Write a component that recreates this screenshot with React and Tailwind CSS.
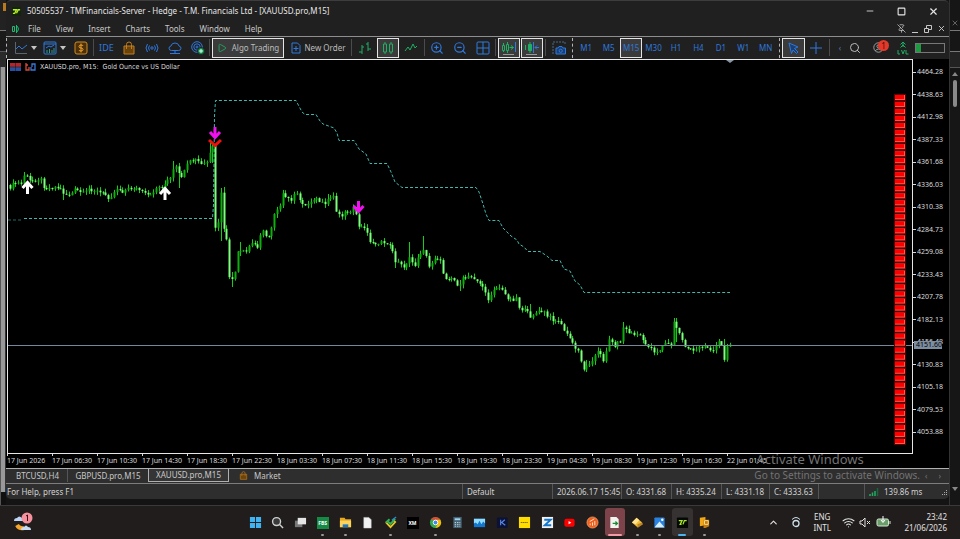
import React from "react";
import {
  ChevronUp, Minus, PinOff, Play, Search, Square, Wifi, X, ZoomIn, ZoomOut,
} from "lucide-react";

const PRICES = [
  "4464.28", "4438.63", "4412.98", "4387.33", "4361.68", "4336.03", "4310.38", "4284.73", "4259.08",
  "4233.43", "4207.78", "4182.13", "4156.48", "4130.83", "4105.18", "4079.53", "4053.88",
];

const DATES = [
  "17 Jun 2026", "17 Jun 06:30", "17 Jun 10:30", "17 Jun 14:30", "17 Jun 18:30", "17 Jun 22:30",
  "18 Jun 03:30", "18 Jun 07:30", "18 Jun 11:30", "18 Jun 15:30", "18 Jun 19:30", "18 Jun 23:30",
  "19 Jun 04:30", "19 Jun 08:30", "19 Jun 12:30", "19 Jun 16:30", "22 Jun 01:45",
];

const TIMEFRAMES = ["M1", "M5", "M15", "M30", "H1", "H4", "D1", "W1", "MN"];
const MENUS = ["File", "View", "Insert", "Charts", "Tools", "Window", "Help"];

// closing prices as x,y turning points
const CLOSES = [
  [8, 185], [11, 188], [14, 183], [18, 183], [21, 184], [24, 175], [28, 178], [30, 181], [34, 180], [38, 179],
  [42, 180], [44, 186], [47, 189], [52, 187], [57, 187], [61, 190], [64, 194], [68, 195], [72, 193], [75, 190],
  [80, 192], [84, 194], [89, 189], [94, 190], [98, 192], [104, 194], [108, 197], [112, 195], [117, 188],
  [122, 191], [128, 189], [134, 188], [139, 190], [144, 194], [150, 196], [155, 188], [161, 187], [165, 184],
  [168, 179], [172, 178], [174, 163], [177, 170], [180, 177], [184, 172], [188, 163], [194, 160], [197, 160],
  [200, 165], [206, 163], [209, 160], [211, 148], [213, 148], [215, 229], [218, 222], [221, 194], [224, 228],
  [227, 247], [229, 279], [232, 278], [235, 272], [238, 253], [240, 252], [246, 252], [249, 246], [253, 243],
  [257, 246], [260, 234], [263, 232], [266, 236], [270, 235], [272, 218], [276, 208], [280, 207], [283, 195],
  [286, 198], [290, 200], [293, 197], [296, 193], [300, 200], [305, 206], [310, 202], [314, 198], [320, 202],
  [325, 206], [328, 199], [333, 196], [336, 210], [340, 216], [344, 213], [350, 210], [353, 209], [355, 212],
  [358, 225], [362, 228], [367, 231], [370, 243], [376, 243], [382, 243], [388, 243], [392, 250], [395, 261],
  [400, 264], [405, 267], [408, 253], [412, 264], [415, 265], [418, 256], [422, 248], [425, 253], [429, 265],
  [433, 265], [436, 258], [440, 260], [443, 272], [447, 279], [452, 279], [459, 286], [463, 279], [470, 277],
  [476, 279], [482, 286], [487, 300], [490, 298], [492, 289], [500, 287], [503, 293], [511, 300], [517, 297],
  [519, 307], [525, 311], [530, 316], [536, 313], [543, 311], [546, 316], [551, 318], [556, 321], [561, 323],
  [564, 332], [569, 335], [573, 347], [578, 351], [581, 360], [584, 369], [588, 364], [593, 358], [598, 352],
  [603, 360], [606, 350], [609, 339], [614, 346], [620, 340], [624, 324], [628, 333], [634, 334], [640, 335],
  [644, 344], [649, 346], [654, 351], [658, 352], [663, 345], [667, 342], [672, 347], [674, 322], [677, 330],
  [681, 337], [685, 346], [690, 350], [695, 352], [698, 346], [703, 345], [708, 348], [713, 351], [717, 343],
  [722, 343], [724, 358], [727, 345], [731, 345],
];

// long wicks: x, top, bottom
const SPIKES = [
  [24, 172, 184], [64, 190, 200], [174, 161, 172], [179, 166, 188], [211, 143, 163], [221, 188, 241],
  [224, 187, 232], [232, 272, 287], [240, 242, 256], [283, 190, 208], [328, 194, 206], [409, 242, 262],
  [423, 236, 253], [395, 256, 268], [459, 280, 291], [530, 304, 314], [586, 360, 372], [624, 322, 333],
  [675, 318, 342], [694, 346, 354], [724, 339, 359],
];

const BAND =
  "M24 218.5H212.5L213.5 205L214.5 116L215.5 100.5H296L302 112L305 114.5H316L320 121L323 124L334 128L337 133L339 140.5H354L359 149L366 154L370 163.5H387L391 172L395 182L402 187.5H476L479 192L483 204L486 214L489 220.5H499L503 228L511 236L517 240L519 244L524 247L528 251.5H540L547 256L552 260.5H560L564 269L570 271L575 281L580 285L584 292.5H730";

const closeAt = (x) => {
  const i = CLOSES.findIndex((p) => p[0] >= x);
  if (i <= 0) return CLOSES[i === 0 ? 0 : CLOSES.length - 1][1];
  const [x0, y0] = CLOSES[i - 1];
  const [x1, y1] = CLOSES[i];
  return y0 + ((y1 - y0) * (x - x0)) / (x1 - x0);
};

const noise = (n) => {
  const v = Math.sin(n * 12.9898) * 43758.5453;
  return v - Math.floor(v);
};

const buildCandles = () => {
  const list = [];
  let open = 185;
  for (let i = 1; i <= 257; i++) {
    const x = Math.round(7 + i * 2.8125);
    const close = closeAt(x) + (noise(i) - 0.5) * 4;
    let top = Math.min(open, close) - noise(i + 300) * 4;
    let bottom = Math.max(open, close) + noise(i + 600) * 4;
    const spike = SPIKES.find((s) => Math.abs(s[0] - x) <= 1);
    if (spike) {
      top = Math.min(top, spike[1]);
      bottom = Math.max(bottom, spike[2]);
    }
    list.push({ x, open, close, top, bottom });
    open = close;
  }
  return list;
};

const candles = buildCandles();

const Arrow = ({ x, y, color, up }) => (
  <path
    d={up ? "M0 13V1M-5 7L0 1.500L5 7" : "M0 0V11M-5 5L0 10.500L5 5"}
    transform={`translate(${x} ${y})`}
    fill="none"
    stroke={color}
    strokeWidth="3"
  />
);

const Plot = () => (
  <svg viewBox="8 60 904 393" preserveAspectRatio="none" className="absolute inset-0 h-full w-full" aria-hidden="true">
    <path d="M726 60h8l-4 3z" fill="#8a97a5" />
    <path d="M8 220H22" stroke="#1d6a66" strokeDasharray="3 2" />
    <path d={BAND} fill="none" stroke="#3fb8ae" strokeDasharray="3 2" />
    {candles.map((c, i) => {
      const bear = c.close > c.open;
      return (
        <g key={i}>
          <path d={`M${c.x + 0.5} ${c.top}V${c.bottom}`} stroke="#14d014" />
          <rect
            x={c.x - 0.5}
            y={Math.min(c.open, c.close)}
            width="2"
            height={Math.max(1, Math.abs(c.close - c.open))}
            fill={bear ? "#7dff7d" : "#0cae0c"}
          />
        </g>
      );
    })}
    <path d="M8 345.500H912" stroke="#76879a" />
    <Arrow x={27.5} y={181} color="#fff" up />
    <Arrow x={165} y={187} color="#fff" up />
    <path d="M209 140l6 5.500l6-5.500" fill="none" stroke="#f01010" strokeWidth="3" />
    <Arrow x={215} y={127} color="#f010f0" />
    <Arrow x={358.5} y={201} color="#f010f0" />
    {Array.from({ length: 50 }, (_, i) => (
      <g key={i}>
        <rect x="894" y={94 + i * 7.02} width="12" height="7" fill="#5c0000" />
        <rect x="895" y={95 + i * 7.02} width="10" height="5" fill="#ff5a4a" />
        <rect x="895" y={95 + i * 7.02} width="9" height="4" fill="#ff0000" />
      </g>
    ))}
  </svg>
);

const Ico = ({ children, className = "h-[14px] w-[14px]", box = "0 0 14 14" }) => (
  <svg viewBox={box} className={className} fill="none" stroke="currentColor" aria-hidden="true">
    {children}
  </svg>
);

const Tool = ({ label, active, className = "text-[#2f78dc]", children }) => (
  <button
    type="button"
    aria-label={label}
    className={`flex h-5 items-center justify-center border ${active ? "border-[#e4e4e4] bg-[#3b3b3b]" : "border-transparent"} ${className}`}
  >
    {children}
  </button>
);

const Sep = () => <div className="h-[17px] w-px bg-[#4b4b4b]" />;
const Dotted = () => <div className="h-5 border-l border-dashed border-[#b5b5b5]" />;
const Caret = () => (
  <Ico className="h-1 w-[6px]" box="0 0 6 4">
    <path d="M0 0h6L3 4z" fill="#c4c4c4" stroke="none" />
  </Ico>
);

const Bag = ({ className }) => (
  <Ico className={className}>
    <path d="M2 5h10v8H2z" fill="#6b430c" stroke="#c27d1c" />
    <path d="M4.500 8V3.500Q4.500 1 7 1t2.500 2.500V8" stroke="#c27d1c" />
  </Ico>
);

const TitleBar = () => (
  <header className="flex h-5 items-center pl-[6px] text-[#e6e6e6]">
    <Ico className="h-[9px] w-[9px]" box="0 0 10 10">
      <rect width="10" height="10" fill="#12250c" stroke="none" />
      <path d="M1 3h4L3 7H1M9 3H7L5 7" stroke="#b6ee2c" strokeWidth="1.500" />
    </Ico>
    <h1 className="ml-[6px] whitespace-nowrap text-[8px] leading-[12px]">
      50505537 - TMFinancials-Server - Hedge - T.M. Financials Ltd - [XAUUSD.pro,M15]
    </h1>
    <div className="ml-auto flex items-center gap-[22px] pr-[10px]">
      <button type="button" aria-label="Minimize"><Minus size={10} strokeWidth={2} /></button>
      <button type="button" aria-label="Maximize"><Square size={9} strokeWidth={3} /></button>
      <button type="button" aria-label="Close"><X size={11} strokeWidth={2.5} /></button>
    </div>
  </header>
);

const MenuBar = () => (
  <nav className="flex h-4 items-center border-b border-[#8e8e8e] pl-[5px] text-[8px] leading-[12px] text-[#c8c8c8]">
    <Ico className="h-[10px] w-[9px] text-[#1fb972]" box="0 0 9 10">
      <path d="M1.500 2.500h2v5h-2zM5.500 1v8M5.500 2.500h1Q8.500 5 6.500 7.500h-1" />
    </Ico>
    <div className="ml-2 flex gap-[15px]">
      {MENUS.map((m) => (
        <button key={m} type="button">{m}</button>
      ))}
    </div>
    <div className="ml-auto flex items-center gap-[5px] pr-[3px]">
      <button type="button" aria-label="Unpin"><PinOff size={9} /></button>
      <button type="button" aria-label="Minimize chart"><Ico className="h-2 w-2" box="0 0 8 8"><path d="M1 7.500h6" /></Ico></button>
      <button type="button" aria-label="Restore chart">
        <Ico className="h-2 w-2" box="0 0 8 8"><path d="M.5 3.500h4v4h-4zM2.500 3V.5h5v4H5" /></Ico>
      </button>
      <button type="button" aria-label="Close chart"><X size={9} strokeWidth={2.5} /></button>
    </div>
  </nav>
);

const Toolbar = () => (
  <div className="flex h-[22px] items-center overflow-hidden pb-px text-[8px] leading-[12px]">
    <Dotted />
    <div className="ml-[4px] grid w-[58px] grid-cols-2">
      <button type="button" aria-label="Line studies" className="flex items-center justify-center gap-[3px] text-[#2f78dc]">
        <Ico><path d="M1.500 1v11.500H13" stroke="#5b6570" /><path d="M2 8l3-3 3 3 5-4" /></Ico>
        <Caret />
      </button>
      <button type="button" aria-label="Indicators" className="flex items-center justify-center gap-[3px] text-[#2f78dc]">
        <Ico><rect x="1" y="1" width="12" height="12" rx="1" /><path d="M1 3h12M3 7l3-2 2 1 3-2" /><path d="M4 12V9M6.500 12V8M9 12V9M11 12V7" stroke="#2a9a8a" /></Ico>
        <Caret />
      </button>
    </div>
    <Tool label="Trade" className="w-[24px] text-[#d08a22]">
      <Ico><rect x="1" y="1" width="12" height="12" rx="2" fill="#4b300a" /><path d="M9 5Q9 4 7 4T5 5.500t2 1.500 2 1.500T7 10 5 9M7 2.500v9" stroke="#f0a22e" /></Ico>
    </Tool>
    <Sep />
    <div className="ml-px grid w-[114px] grid-cols-5">
      <Tool label="MetaEditor"><span className="text-[9px]">IDE</span></Tool>
      <Tool label="Market"><Bag className="h-[14px] w-[14px]" /></Tool>
      <Tool label="Signals">
        <Ico><circle cx="7" cy="7" r="1.200" /><path d="M4.500 4.500q-2 2.500 0 5M9.500 4.500q2 2.500 0 5M2.500 3q-3 4 0 8M11.500 3q3 4 0 8" /></Ico>
      </Tool>
      <Tool label="Virtual hosting">
        <Ico><path d="M3.500 9.500Q1 9.500 1 7.200 1 5.500 3 5 3.500 2 7 2t4 3q2 .5 2 2.200 0 2.300-2.500 2.300zM7 9.500V12M2 12.500h10" /></Ico>
      </Tool>
      <Tool label="Community">
        <Ico><circle cx="6" cy="6" r="5.300" /><circle cx="6" cy="6" r="3.200" /><circle cx="6" cy="6" r="1" /><circle cx="10" cy="10" r="3.500" fill="#159957" stroke="#222" /><path d="M10 8v4M8 10h4" stroke="#dfffe9" /></Ico>
      </Tool>
    </div>
    <Sep />
    <button type="button" className="ml-[2px] flex h-5 w-[72px] items-center justify-center gap-[5px] border border-[#e4e4e4] bg-[#3b3b3b] text-[#bcbcbc]">
      <Play size={10} className="text-[#1fae63]" />
      Algo Trading
    </button>
    <button type="button" className="ml-px flex h-5 w-[66px] items-center justify-center gap-[4px] text-[#bcbcbc]">
      <Ico className="h-[12px] w-[10px] text-[#2f78dc]" box="0 0 10 12"><path d="M1 1h5.500L9 3.500V11H1zM5 4v5M2.500 6.500h5" /></Ico>
      New Order
    </button>
    <Sep />
    <div className="ml-[2px] grid w-[68px] grid-cols-3">
      <Tool label="Bars" className="text-[#1fae63]"><Ico><path d="M4 4v9M1 11h3M4 6h2M10 1v9M8 3h2M10 8h3" /></Ico></Tool>
      <Tool label="Candles" active className="text-[#1fae63]"><Ico><path d="M2.500 3h3v8h-3zM8.500 3h3v8h-3zM4 1v2M4 11v2M10 1v2M10 11v2" /></Ico></Tool>
      <Tool label="Line" className="text-[#1fae63]"><Ico><path d="M1 10l3-4 2 3 3-6 2 4 2-2" /></Ico></Tool>
    </div>
    <div className="ml-[2px]"><Sep /></div>
    <div className="grid w-[70px] grid-cols-3">
      <Tool label="Zoom in"><ZoomIn size={14} strokeWidth={2} /></Tool>
      <Tool label="Zoom out"><ZoomOut size={14} strokeWidth={2} /></Tool>
      <Tool label="Tile windows"><Ico><rect x="1" y="1" width="12" height="12" rx="1" /><path d="M7 1v12M1 7h12" /></Ico></Tool>
    </div>
    <Sep />
    <div className="mx-[2px] grid w-[45px] grid-cols-2 gap-px">
      <Tool label="Auto scroll" active className="text-[#1fae63]">
        <Ico className="h-4 w-4" box="0 0 16 16"><path d="M1.500 5.500h2v5h-2zM5.500 4.500h2v6h-2zM2.500 3v2M2.500 11v1M6.500 2v2M6.500 11v2M8.500 7.500h4M10 5.500l2.500 2L10 9.500" /><path d="M14.500 2v10" stroke="#2f78dc" /><path d="M2 14.500h11" stroke="#999" /></Ico>
      </Tool>
      <Tool label="Chart shift" active className="text-[#1fae63]">
        <Ico className="h-4 w-4" box="0 0 16 16"><path d="M1.500 5v5M6 2v11" /><path d="M4.500 4.500h3v6h-3z" fill="currentColor" /><path d="M9.500 2v11M15 7.500h-4M13 5.500l-2 2 2 2" stroke="#2f78dc" /><path d="M2 14.500h11" stroke="#999" /></Ico>
      </Tool>
    </div>
    <Sep />
    <Tool label="Screenshot" className="w-[26px] text-[#2f78dc]">
      <Ico><path d="M1 13V1h12v3" strokeDasharray="2 1" stroke="#4d6788" /><path d="M4 7h2l1-1.500h3L11 7h2.500v6H4z" fill="#1b3f73" /><circle cx="8.700" cy="9.800" r="1.600" /></Ico>
    </Tool>
    <Dotted />
    <div className="mx-[2px] grid w-[202px] grid-cols-9">
      {TIMEFRAMES.map((t) => (
        <Tool key={t} label={t} active={t === "M15"}>{t}</Tool>
      ))}
    </div>
    <Dotted />
    <div className="ml-[2px] grid w-[45px] grid-cols-2">
      <Tool label="Cursor" active><Ico><path d="M3 2l9 4-3.500 1.500L12 11l-1.500 1.500L7 9l-1.500 3.500z" fill="#1b3f73" /></Ico></Tool>
      <Tool label="Crosshair"><Ico><path d="M7 1v4M7 9v4M1 7h4M9 7h4M7 5v4M5 7h4" /></Ico></Tool>
    </div>
    <div className="ml-[2px]"><Sep /></div>
    <div className="ml-auto flex items-center pr-[4px]">
      <Tool label="Previous tools" className="w-[10px] text-[#4f7cb5]">‹</Tool>
      <Tool label="Search" className="w-[20px] text-[#bcbcbc]"><Search size={12} strokeWidth={2} /></Tool>
      <button type="button" aria-label="Notifications" className="relative flex h-5 w-[26px] items-center justify-center text-[#bcbcbc]">
        <Ico className="h-[11px] w-[11px]"><circle cx="7" cy="7" r="6" /><circle cx="7" cy="5.500" r="2" /><path d="M3 11q4-4 8 0" /></Ico>
        <span className="absolute right-[2px] top-[2px] h-[11px] w-[11px] rounded-full bg-[#e23a2a] text-[8px] leading-[11px] text-[#4d0905]">1</span>
      </button>
      <Tool label="Level" className="w-[24px] text-[#1fae63]">
        <Ico><path d="M7 1v5M4.500 3.500L7 1l2.500 2.500M4.500 6.500L7 4l2.500 2.500M2 9v4h2M5.500 9L7 13l1.500-4M10 9v4h2.500" /></Ico>
      </Tool>
      <div className="h-[10px] w-[30px] border border-[#777]"><div className="h-full w-[5px] bg-[#1f9a42]" /></div>
    </div>
  </div>
);

const Chart = () => (
  <main className="flex min-h-0 flex-1 flex-col bg-black text-[7px] leading-[10px] text-[#dcdcdc]">
    <div className="flex min-h-0 flex-1">
      <section className="relative ml-px flex-1 border border-[#e6e6e6]">
        <Plot />
        <div className="relative flex items-center gap-[4px] px-[2px] pt-[2px]">
          <Ico className="h-2 w-[11px]" box="0 0 11 8"><path d="M0 0h11v4H0z" fill="#b3272a" stroke="none" /><path d="M0 4h11v4H0z" fill="#2850a0" stroke="none" /><path d="M0 4h11M5.500 0v8" stroke="#111" strokeWidth=".5" /></Ico>
          <Ico className="h-2 w-[11px]" box="0 0 11 8"><path d="M1 0v7h3V4M1 2h2" stroke="#d84a3a" strokeWidth="1.300" /><path d="M6 4v3h4V1H7v3" stroke="#3a78d8" strokeWidth="1.300" /></Ico>
          <h2 className="whitespace-pre font-['DejaVu_Sans_Condensed','DejaVu_Sans',sans-serif] text-[7px]">XAUUSD.pro, M15:  Gold Ounce vs US Dollar</h2>
        </div>
      </section>
      <aside className="relative flex w-9 flex-col justify-between pb-[17px] pt-[8px]">
        {PRICES.map((p) => (
          <div key={p} className="flex items-center gap-px"><span className="h-px w-[3px] bg-[#d6d6d6]" />{p}</div>
        ))}
        <div className="absolute left-px top-[71.500%] h-2 w-7 bg-[#7d8da0] pl-[2px] leading-[8px] text-black">4151.60</div>
      </aside>
    </div>
    <div className="ml-px flex h-[14px] overflow-hidden">
      {DATES.map((d) => (
        <div key={d} className="w-[45px] shrink-0 whitespace-nowrap">
          <div className="h-[2px] w-px bg-[#d6d6d6]" />
          {d}
        </div>
      ))}
    </div>
  </main>
);

const ChartTabs = () => (
  <div className="relative flex h-[15px] items-start border-t border-[#b0b0b0] bg-[#2e2e2e] text-[8px] leading-[13px] text-[#c8c8c8]">
    <button type="button" className="w-[62px] border-r border-[#555] pl-[2px]">BTCUSD,H4</button>
    <button type="button" className="w-[80px]">GBPUSD.pro,M15</button>
    <button type="button" className="w-[81px] border-x border-b border-[#b0b0b0] bg-[#353535] leading-[12px]">XAUUSD.pro,M15</button>
    <button type="button" className="ml-[10px] flex items-center gap-[6px]"><Bag className="h-[9px] w-[9px]" />Market</button>
    <div className="ml-auto flex gap-[11px] pr-[8px] text-[#777]"><span>‹</span><span>›</span></div>
    <div className="pointer-events-none absolute -top-[18px] right-[29px] whitespace-nowrap text-[#737373]">
      <p className="pl-[2px] text-[13px] leading-[17px]">Activate Windows</p>
      <p className="text-[10px] leading-[14px]">Go to Settings to activate Windows.</p>
    </div>
  </div>
);

const StatusBar = () => (
  <footer className="flex h-4 items-center whitespace-nowrap border-t border-[#7d7d7d] bg-[#2e2e2e] text-[8px] leading-[15px] text-[#d2d2d2] [&>span]:border-r [&>span]:border-[#555] [&>span]:pl-1">
    <p className="flex-1 border-r border-[#555] pl-px">For Help, press F1</p>
    <span className="w-[90px]">Default</span>
    <span className="w-[69px]">2026.06.17 15:45</span>
    <span className="w-[50px]">O: 4331.68</span>
    <span className="w-[50px]">H: 4335.24</span>
    <span className="w-[48px]">L: 4331.18</span>
    <span className="w-[49px]">C: 4333.63</span>
    <span className="h-[15px] w-[46px]" />
    <div className="flex w-[84px] items-center gap-[5px] pl-1">
      <Ico className="h-2 w-[10px]" box="0 0 10 8"><path d="M1 8V6M3.500 8V4.500M6 8V3" stroke="#1fae63" strokeWidth="1.500" /><path d="M8.500 8V0" stroke="#17653d" strokeWidth="1.500" /></Ico>
      139.86 ms
      <Ico className="ml-auto mr-px h-[7px] w-[7px]" box="0 0 7 7"><path d="M1 6.500h6M3 4.500h4M5 2.500h2" strokeDasharray="1 1" stroke="#aaa" /></Ico>
    </div>
  </footer>
);

const APPS = [
  { name: "Start", art: <path d="M1 1h5.500v5.500H1zM7.500 1H13v5.500H7.500zM1 7.500h5.500V13H1zM7.500 7.500H13V13H7.500z" fill="#3fb4f0" stroke="none" /> },
  { name: "Search", art: <><circle cx="6" cy="6" r="4.300" stroke="#d0d0d0" strokeWidth="1.500" fill="#3a3a3a" /><path d="M9 9l4 4" stroke="#d0d0d0" strokeWidth="1.500" /></> },
  { name: "Task view", art: <><path d="M1 5h8v7H1z" fill="#777" stroke="none" /><path d="M4 2h9v7H4z" fill="#e4e4e4" stroke="none" /></> },
  { name: "FBS", dot: true, text: "FBS", tile: "bg-[#158a45] text-white" },
  { name: "Files", dot: true, art: <><path d="M1 2h5l1 1.500h6V12H1z" fill="#e9a820" stroke="none" /><path d="M1 5h12v7H1z" fill="#fbd25a" stroke="none" /><path d="M4 9h6v3H4z" fill="#1a78c8" stroke="none" /></> },
  { name: "Document", art: <path d="M3 1.500h5.500L11 4v9H3z" fill="#f2f2f2" stroke="#ccc" strokeWidth=".5" /> },
  { name: "Trader", dot: true, art: <><path d="M2 6.500L7 12l5-5.500L9.500 4" stroke="#e8c425" strokeWidth="2" /><path d="M2 7l4-3.500M4.500 6L7 8.500 12 3" stroke="#2fb558" strokeWidth="2" /><path d="M8.500 4.500L13 1" stroke="#2a8ad0" strokeWidth="1.500" /></> },
  { name: "XM", text: "XM", tile: "bg-black text-white" },
  { name: "Chrome", dot: true, art: <><circle cx="7" cy="7" r="6" fill="#33a852" stroke="none" /><path d="M1.800 4A6 6 0 0 1 12.200 4H7z" fill="#ea4335" stroke="none" /><path d="M12.200 4A6 6 0 0 1 7 13l2.500-5L7 4z" fill="#fbbc05" stroke="none" /><circle cx="7" cy="7" r="2.500" fill="#4285f4" stroke="#fff" /></> },
  { name: "Calculator", art: <><rect x="2.500" y="1" width="9" height="12" fill="#446273" stroke="none" /><path d="M4 3.500h6" stroke="#9fd4ee" strokeWidth="2" /><path d="M4 7h6M4 9h6M4 11h6" stroke="#c4d6de" strokeDasharray="1.500 1" /></> },
  { name: "Performance", art: <><path d="M1 3h12v9H1z" fill="#1377cf" stroke="none" /><path d="M1 3h12v5l-2-2-2 3-2-4-2 4-2-2-2 1z" fill="#8fdcff" stroke="none" /></> },
  { name: "K", art: <><rect x="1" y="1.500" width="11.500" height="11.500" rx="1" fill="#0a1236" stroke="none" /><path d="M5 4v6M9.500 4L6 7l4 3" stroke="#5b86ea" strokeWidth="1.200" /></> },
  { name: "Exness", art: <><rect x="1" y="1" width="12" height="12" fill="#ffdd00" stroke="none" /><path d="M3 7h8" stroke="#71620a" strokeDasharray="1.500 .5" /></> },
  { name: "Z", art: <><rect x="1" y="1" width="12" height="12" fill="#f2f2f2" stroke="none" /><path d="M3.500 4h7l-6.500 6h7" stroke="#1377cf" strokeWidth="2" /></> },
  { name: "YouTube", art: <><rect x="1.500" y="3" width="11" height="8.500" rx="2" fill="#f00" stroke="none" /><path d="M6 5.500v3.500L9 7.200z" fill="#fff" stroke="none" /></> },
  { name: "Music", art: <><circle cx="7" cy="7" r="6" fill="#ef5f1c" stroke="#ffb27f" strokeWidth=".7" /><path d="M4.500 10V8M7 10.500V7M9.500 10V5.500M4 6l5-3" stroke="#ffe5d2" /></> },
  { name: "Export", state: "alert", art: <><path d="M2.500 1h6.500l2.500 2.500V13h-9z" fill="#f4f4ee" stroke="none" /><path d="M5 8h5M8 6l2.200 2L8 10" stroke="#188a38" strokeWidth="1.300" /></> },
  { name: "Notes", dot: true, art: <><path d="M6 2l6 5-5 5-6-5z" fill="#f3b932" stroke="none" /><path d="M6 2l3 2.500L5 9 1 7z" fill="#ffe38e" stroke="none" /><path d="M7 9l5-2 1 2-6 4z" fill="#b8852a" stroke="none" /></> },
  { name: "Photos", dot: true, art: <><rect x="1.500" y="1.500" width="11" height="11" rx="1" fill="#2a82e0" stroke="none" /><path d="M1.500 12.500L7 6l5.500 6.500z" fill="#d6efff" stroke="none" /><circle cx="10" cy="4" r="1.300" fill="#fff" stroke="none" /></> },
  { name: "MetaTrader", state: "open", art: <><rect x="1" y="1.500" width="12" height="11.500" rx="1" fill="#050805" stroke="none" /><path d="M3 5h3.500L4.500 9H6M11.500 5H9L7.500 9" stroke="#a8e82a" strokeWidth="1.400" /></> },
  { name: "Editor", dot: true, art: <><path d="M2 2l6-1v9l-6 1z" fill="#f0a818" stroke="none" /><path d="M6 4h6v7l-4 2H6z" fill="#c47a10" stroke="none" /><path d="M7 5h4v4H7z" stroke="#ffe28a" /></> },
];

const Taskbar = () => (
  <footer className="grid h-[34px] grid-cols-[1fr_472px_1fr] items-center border-t border-[#3a3a3a] bg-[#201d1c] pb-px text-[8px] leading-[11px] text-[#e2e2e2]">
    <button type="button" aria-label="Weather" className="ml-[13px] w-5">
      <Ico className="h-5 w-5" box="0 0 20 20">
        <path d="M4 13q2 4 7 3" stroke="#f4a52a" strokeWidth="4" />
        <path d="M1 9q0-3 3-3 2-3 5 0 2 0 2 3z" fill="#b9d4f5" stroke="none" />
        <path d="M8 18q0-3 3-3 2-3 4 0 3 0 3 3z" fill="#c7dcf3" stroke="none" />
        <circle cx="14" cy="6" r="5.500" fill="#f5919d" stroke="none" />
        <path d="M13 4l1.500-1v6" stroke="#3d1015" />
      </Ico>
    </button>
    <div className="grid grid-cols-[repeat(21,minmax(0,1fr))]">
      {APPS.map((a) => (
        <button
          key={a.name}
          type="button"
          aria-label={a.name}
          className={`mx-px flex h-7 flex-col items-center justify-end rounded-[3px] ${a.state === "alert" ? "bg-[#7c434b]" : a.state === "open" ? "bg-[#353231]" : ""}`}
        >
          {a.text ? (
            <span className={`flex h-3 w-3 items-center justify-center text-[5px] font-bold ${a.tile}`}>{a.text}</span>
          ) : (
            <Ico className="h-[13px] w-[13px]">{a.art}</Ico>
          )}
          <span
            className={`mt-[5px] rounded-full ${a.state === "alert" ? "h-[2px] w-[14px] bg-[#f29aa6]" : a.state === "open" ? "h-[2px] w-2 bg-[#4cb4ee]" : a.dot ? "h-[2px] w-[3px] bg-[#999]" : "h-[2px] w-[3px]"}`}
          />
        </button>
      ))}
    </div>
    <div className="flex items-center justify-end pr-[13px]">
      <button type="button" aria-label="Hidden icons"><ChevronUp size={11} strokeWidth={2.5} /></button>
      <Ico className="ml-[12px] h-3 w-[10px]" box="0 0 10 12"><circle cx="5" cy="7.500" r="3" stroke="#cfe0ea" strokeWidth="1.300" /><path d="M1 3.500q4-4 8 0" stroke="#cfe0ea" /></Ico>
      <p className="ml-[13px] text-center">ENG<br />INTL</p>
      <Wifi size={13} strokeWidth={2} className="ml-[11px]" />
      <Ico className="ml-1 h-[11px] w-[12px]" box="0 0 12 11"><path d="M1 4h2l3-3v9L3 7H1zM8 4l3 3M11 4L8 7" /></Ico>
      <Ico className="ml-[5px] h-[12px] w-[15px]" box="0 0 15 12"><rect x="1" y="3" width="11.500" height="7" rx="1.500" fill="#6a9d6b" stroke="#d4ead4" /><path d="M14 5v3" stroke="#d4ead4" /><path d="M7 0v6M5 4l2 2.500L9 4" stroke="#fff" /></Ico>
      <p className="ml-[10px] w-[46px] text-right">23:42<br />21/06/2026</p>
    </div>
  </footer>
);

const App = () => (
  <div className="flex h-screen flex-col overflow-hidden bg-[#141414] font-['Noto_Sans','Liberation_Sans',sans-serif]">
    <div className="flex min-h-0 flex-1">
      <div className="flex w-[6px] flex-col">
        <div className="flex h-[31px] justify-end border-b border-[#777] bg-[#222] pt-[3px]"><div className="h-2 w-[3px] bg-[#b87a1e]" /></div>
        <div className="h-[21px] border-b border-[#555] bg-[#1a1a1a]" />
        <div className="h-[15px] bg-[#2a2a2a]" />
        <div className="flex-1 border-l border-r border-l-[#555] border-r-[#333] bg-[#999]" />
        <div className="h-[13px] border-l border-[#555] bg-[#101010]" />
      </div>
      <div className="flex min-w-0 flex-1 flex-col pb-[6px]">
        <div className="flex min-h-0 flex-1 flex-col overflow-hidden rounded-[5px] border-t border-[#3d3d3d] bg-[#202020]">
          <TitleBar />
          <MenuBar />
          <Toolbar />
          <Chart />
          <ChartTabs />
          <StatusBar />
        </div>
      </div>
      <div className="flex w-[11px] flex-col items-center border-l border-[#333] bg-[#161616] text-[#888]">
        <div className="flex h-[31px] w-full items-end justify-center border-b border-[#777] pb-[3px]"><X size={8} /></div>
        <div className="h-[21px] w-full border-b border-[#777]" />
        <div className="h-4 w-full border-b border-[#555] bg-[#222]" />
        <Ico className="mt-1 h-1 w-[6px]" box="0 0 6 4"><path d="M0 4h6L3 0z" fill="#888" stroke="none" /></Ico>
        <div className="mt-1 h-[27px] w-1 rounded-full bg-[#8a8a8a]" />
        <Ico className="mb-[14px] mt-auto h-1 w-[6px]" box="0 0 6 4"><path d="M0 0h6L3 4z" fill="#888" stroke="none" /></Ico>
      </div>
    </div>
    <Taskbar />
  </div>
);

export default App;
